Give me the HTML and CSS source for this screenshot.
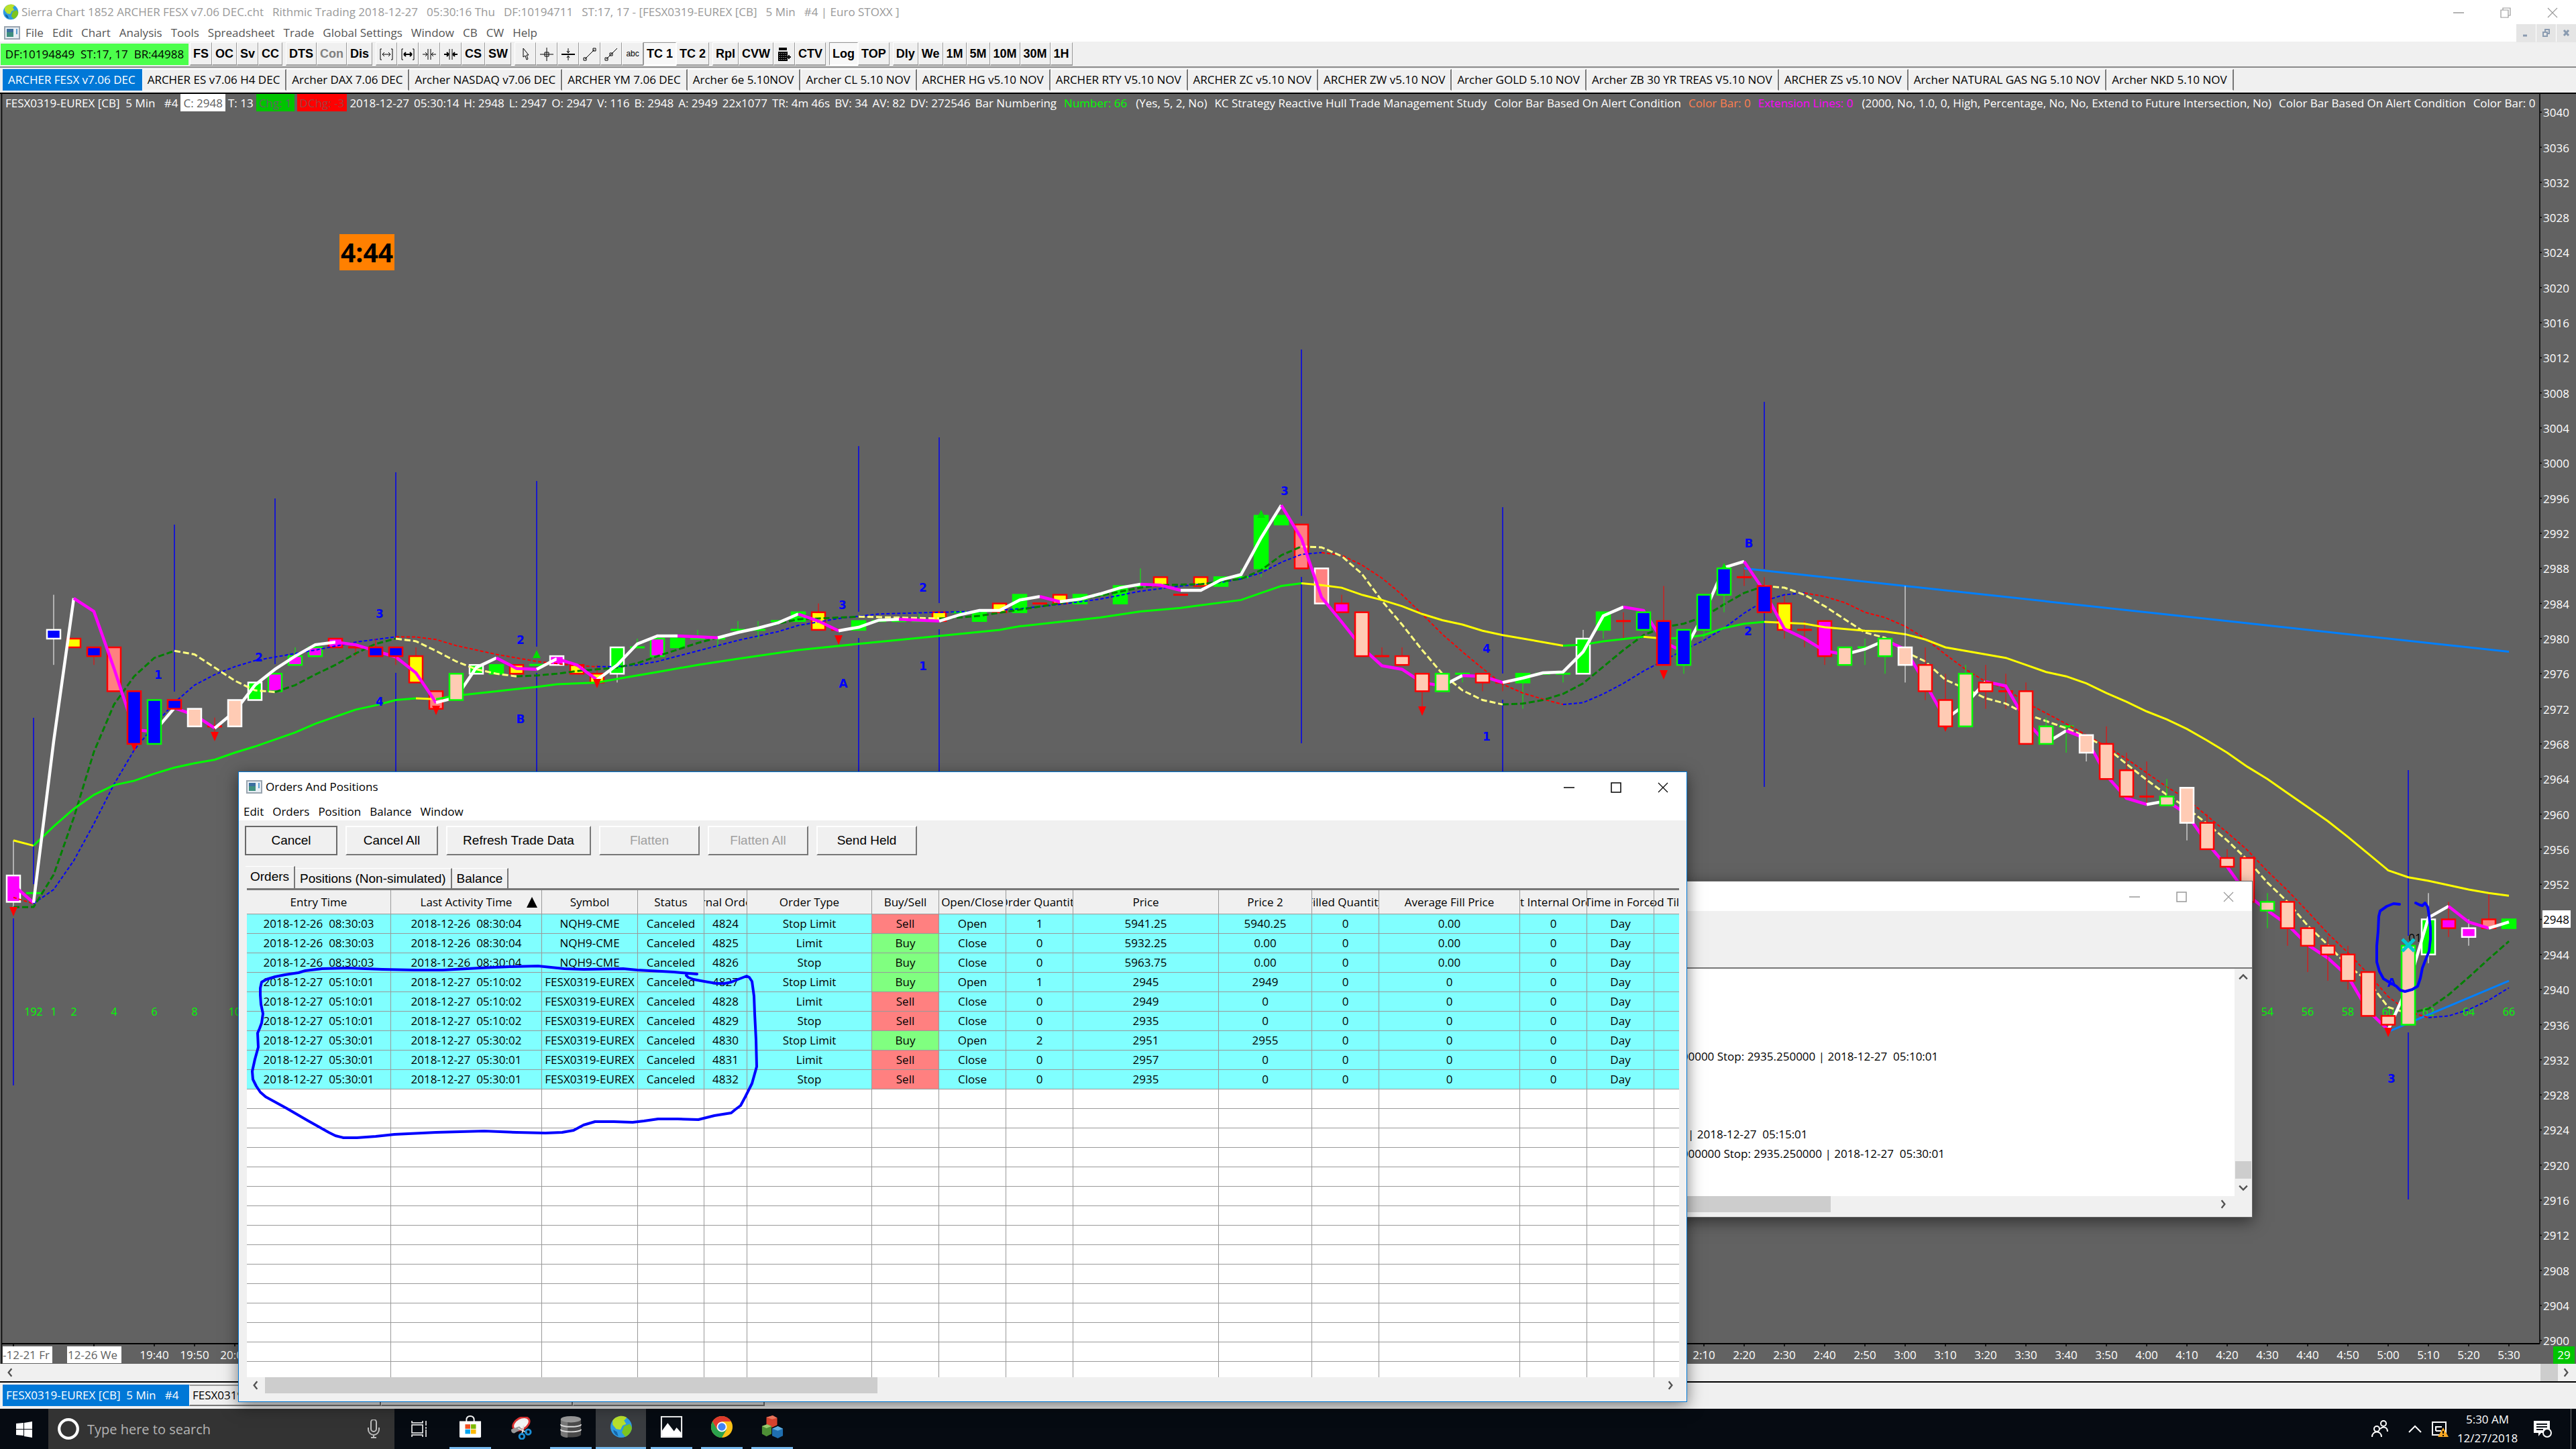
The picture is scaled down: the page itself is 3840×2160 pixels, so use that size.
FILE: index.html
```html
<!DOCTYPE html>
<html lang="en">
<head>
  <meta charset="UTF-8" />
  <meta name="viewport" content="width=device-width, initial-scale=1.0"/>
  <title>Sierra Chart 1852 ARCHER FESX v7.06 DEC.cht</title>
  <link rel="stylesheet" href="styles.css">
</head>
<body>

  <svg class="sprite" aria-hidden="true">
    <symbol id="globe" viewBox="0 0 32 32">
      <circle cx="16" cy="16" r="15" fill="#2f9be0"/>
      <path d="M4 7c5-7 15-8 20-4l-4 4 3 5-5 2-3 6-6-1-5-6z" fill="#b9e02c"/>
      <path d="M20 15l8-3 3 5c0 6-5 11-9 13l-5-6z" fill="#7cc41f"/>
      <path d="M5 20l5 3 2 6c-4-1-7-5-7-9z" fill="#1565a8"/>
    </symbol>
    <symbol id="doc" viewBox="0 0 24 20">
      <rect x="1" y="1" width="22" height="18" fill="#e8eef4" stroke="#9aa5b0" stroke-width="2"/>
      <rect x="4" y="4" width="10" height="12" fill="#3f8f7f"/>
      <rect x="4" y="4" width="10" height="5" fill="#3b6fa0"/>
      <rect x="18" y="4" width="2" height="8" fill="#5b9fd0"/>
    </symbol>
    <symbol id="min" viewBox="0 0 16 16"><path d="M0 8h16" stroke="currentColor" stroke-width="1.5"/></symbol>
    <symbol id="max" viewBox="0 0 16 16"><rect x="1" y="1" width="14" height="14" fill="none" stroke="currentColor" stroke-width="1.5"/></symbol>
    <symbol id="restore" viewBox="0 0 16 16"><path d="M1 4h11v11H1zM4 4V1h11v11h-3" fill="none" stroke="currentColor" stroke-width="1.2"/></symbol>
    <symbol id="close" viewBox="0 0 16 16"><path d="M1 1l14 14M15 1L1 15" stroke="currentColor" stroke-width="1.2"/></symbol>
    <symbol id="left" viewBox="0 0 12 12"><path d="M8 1L4 6l4 5" fill="none" stroke="#505050" stroke-width="2"/></symbol>
    <symbol id="right" viewBox="0 0 12 12"><path d="M4 1l4 5-4 5" fill="none" stroke="#505050" stroke-width="2"/></symbol>
    <symbol id="up" viewBox="0 0 12 12"><path d="M1 8l5-5 5 5" fill="none" stroke="#505050" stroke-width="2"/></symbol>
    <symbol id="down" viewBox="0 0 12 12"><path d="M1 4l5 5 5-5" fill="none" stroke="#505050" stroke-width="2"/></symbol>
  </svg>

  <header class="titlebar">
    <svg class="app-icon"><use href="#globe"/></svg>
    <div class="title">
      <span>Sierra Chart 1852 ARCHER FESX v7.06 DEC.cht</span>
      <span>Rithmic Trading 2018-12-27</span>
      <span>05:30:16 Thu</span>
      <span>DF:10194711</span>
      <span>ST:17, 17 - [FESX0319-EUREX [CB]</span>
      <span>5 Min</span>
      <span>#4 | Euro STOXX ]</span>
    </div>
    <div class="controls">
      <button aria-label="Minimize"><svg><use href="#min"/></svg></button>
      <button aria-label="Restore"><svg><use href="#restore"/></svg></button>
      <button aria-label="Close"><svg><use href="#close"/></svg></button>
    </div>
  </header>

  <nav class="menubar">
    <svg class="doc-icon"><use href="#doc"/></svg>
    <button>File</button><button>Edit</button><button>Chart</button><button>Analysis</button><button>Tools</button><button>Spreadsheet</button><button>Trade</button><button>Global Settings</button><button>Window</button><button>CB</button><button>CW</button><button>Help</button>
    <div class="mdi">
      <button aria-label="Minimize chart"><svg><path d="M1 10h6" stroke="#8a9bb0" stroke-width="3"/></svg></button>
      <button aria-label="Restore chart"><svg><path d="M1 5h6v6H1zM4 4V1h6v6H8" fill="none" stroke="#8a9bb0" stroke-width="2"/></svg></button>
      <button aria-label="Close chart"><svg><path d="M2 2l7 8M9 2l-7 8" stroke="#8a9bb0" stroke-width="3"/></svg></button>
    </div>
  </nav>

  <div class="toolbar">
    <span class="status">DF:10194849&nbsp; ST:17, 17&nbsp; BR:44988</span>
    <div class="group"><button>FS</button><button>OC</button><button>Sv</button><button>CC</button></div>
    <div class="group"><button>DTS</button><button class="off">Con</button><button>Dis</button></div>
    <div class="group">
      <button class="ico" aria-label="Narrower"><svg viewBox="0 0 20 20"><path d="M1 2h2M1 18h2M1 2v16M17 2h2M17 18h2M19 2v16M4 10h12M4 10l3-3M4 10l3 3M16 10l-3-3M16 10l-3 3"/></svg></button>
      <button class="ico" aria-label="Wider"><svg viewBox="0 0 20 20"><path d="M1 2h2M1 18h2M1 2v16M17 2h2M17 18h2M19 2v16"/><path class="bold" d="M4 10h12M4 10l3-3M4 10l3 3M16 10l-3-3M16 10l-3 3"/></svg></button>
      <button class="ico" aria-label="Squeeze bars"><svg viewBox="0 0 20 20"><path d="M8 2v16M12 2v16M0 10h7M7 10L4 7M7 10l-3 3M20 10h-7M13 10l3-3M13 10l3 3"/></svg></button>
      <button class="ico" aria-label="Squeeze bars more"><svg viewBox="0 0 20 20"><path d="M8 2v16M12 2v16"/><path class="bold" d="M0 10h7M7 10L4 7M7 10l-3 3M20 10h-7M13 10l3-3M13 10l3 3"/></svg></button>
      <button>CS</button><button>SW</button>
    </div>
    <div class="group">
      <button class="ico" aria-label="Pointer"><svg viewBox="0 0 20 20"><path d="M7 1v13l3-2 2 6 2-1-2-6h3z"/></svg></button>
      <button class="ico" aria-label="Cross hair"><svg viewBox="0 0 20 20"><path d="M10 0v20M0 10h20M7 7h6v6H7z"/></svg></button>
      <button class="ico" aria-label="Chart values"><svg viewBox="0 0 20 20"><path class="bold" d="M0 10h20"/><path d="M10 1v6M10 13v6M8 5l2 3 2-3M8 15l2-3 2 3"/></svg></button>
      <button class="ico" aria-label="Line"><svg viewBox="0 0 20 20"><path d="M3 17L17 3M1 15h4v4H1zM15 1h4v4h-4z"/></svg></button>
      <button class="ico" aria-label="Ray"><svg viewBox="0 0 20 20"><path d="M3 17L19 1M1 15h4v4H1zM8 8h4v4H8z"/></svg></button>
      <button class="ico abc">abc</button>
      <button class="pressed">TC 1</button><button>TC 2</button>
    </div>
    <div class="group">
      <button>Rpl</button><button>CVW</button>
      <button class="ico" aria-label="Trade window"><svg viewBox="0 0 20 20"><path d="M2 1h12M2 3h12M2 7h12v12H2zM2 10h12M2 13h12M2 16h12M5 7v12M8 7v12M11 7v12M14 14h6M17 11v6" class="bold"/></svg></button>
      <button>CTV</button>
    </div>
    <div class="group"><button class="pressed">Log</button><button>TOP</button></div>
    <div class="group"><button>Dly</button><button>We</button><button>1M</button><button>5M</button><button>10M</button><button>30M</button><button>1H</button></div>
  </div>

  <div class="tabs">
    <button class="active">ARCHER FESX v7.06 DEC</button><button>ARCHER ES v7.06 H4 DEC</button><button>Archer DAX 7.06 DEC</button><button>Archer NASDAQ v7.06 DEC</button><button>ARCHER YM 7.06 DEC</button><button>Archer 6e 5.10NOV</button><button>Archer CL 5.10 NOV</button><button>ARCHER HG v5.10 NOV</button><button>ARCHER RTY V5.10 NOV</button><button>ARCHER ZC v5.10 NOV</button><button>ARCHER ZW v5.10 NOV</button><button>Archer GOLD 5.10 NOV</button><button>Archer ZB 30 YR TREAS V5.10 NOV</button><button>ARCHER ZS v5.10 NOV</button><button>Archer NATURAL GAS NG 5.10 NOV</button><button>Archer NKD 5.10 NOV</button>
  </div>

  <main class="chart">
    <svg id="plot" viewBox="0 140 3840 1893" preserveAspectRatio="none"></svg>
    <div class="readout">
      <div class="fields boxes">
        <span>FESX0319-EUREX [CB]&nbsp; 5 Min&nbsp;&nbsp; #4</span>
        <span class="box white">C: 2948</span>
        <span>T: 13</span>
        <span class="box green">Chg: 1</span>
        <span class="box red">DChg: -3</span>
      </div>
      <div class="fields">
        <span>2018-12-27</span><span>05:30:14</span><span>H: 2948</span><span>L: 2947</span><span>O: 2947</span><span>V: 116</span><span>B: 2948</span><span>A: 2949</span><span>22x1077</span><span>TR: 4m 46s</span><span>BV: 34</span><span>AV: 82</span><span>DV: 272546</span><span>Bar Numbering</span>
      </div>
      <span class="lime">Number: 66</span>
      <span class="after">(Yes, 5, 2, No)</span>
      <span>KC Strategy Reactive Hull Trade Management Study</span>
      <span>Color Bar Based On Alert Condition</span>
      <span class="coral">Color Bar: 0</span>
      <span class="pink">Extension Lines: 0</span>
      <span class="after">(2000, No, 1.0, 0, High, Percentage, No, No, Extend to Future Intersection, No)</span>
      <span>Color Bar Based On Alert Condition</span>
      <span>Color Bar: 0</span>
    </div>
    <div class="timer">4:44</div>
  </main>

  <div class="scroll-row">
    <svg><use href="#left"/></svg>
    <span class="thumb"></span>
    <svg><use href="#right"/></svg>
  </div>

  <div class="tabs bottom">
    <button class="active">FESX0319-EUREX [CB]&nbsp; 5 Min&nbsp;&nbsp; #4</button><button>FESX0319-EUREX [CB]&nbsp; 5 Min&nbsp;&nbsp; #5</button><button>FESX0319-EUREX [CB]&nbsp; 5 Min&nbsp;&nbsp; #6</button><button>FESX0319-EUREX [CB]&nbsp; Daily&nbsp;&nbsp; #7</button>
  </div>

  <footer class="taskbar">
    <button class="start" aria-label="Start"><svg viewBox="0 0 24 24"><path d="M0 3l11-1v9H0zM12 2l12-2v11H12zM0 12h11v9L0 20zM12 12h12v12l-12-2z" fill="#fff"/></svg></button>
    <label class="search">
      <svg class="ring" viewBox="0 0 32 32"><circle cx="16" cy="16" r="13" fill="none" stroke="#fff" stroke-width="4"/></svg>
      <input type="text" placeholder="Type here to search" />
      <svg class="mic" viewBox="0 0 20 28"><path d="M6 4a4 4 0 0 1 8 0v10a4 4 0 0 1-8 0zM2 12v3a8 8 0 0 0 16 0v-3M10 23v4M6 27h8" fill="none" stroke="#bbb" stroke-width="2"/></svg>
    </label>
    <button class="app" aria-label="Task view"><svg class="small" viewBox="0 0 26 26"><path d="M1 7h16v12H1zM1 1v3h16V1M1 25v-3h16v3M22 1v7M22 14v11M22 10v3" fill="none" stroke="#fff" stroke-width="1.500"/></svg></button>
    <button class="app open" aria-label="Store"><svg viewBox="0 0 36 36"><path d="M12 11V7q0-6 6-6t6 6v4" fill="none" stroke="#fff" stroke-width="2"/><path d="M1 9h34v24q0 2-2 2H3q-2 0-2-2z" fill="#fff"/><path d="M10 14h8v7h-8z" fill="#f25022"/><path d="M19 14h8v7h-8z" fill="#7fba00"/><path d="M10 22h8v7h-8z" fill="#00a4ef"/><path d="M19 22h8v7h-8z" fill="#ffb900"/></svg></button>
    <button class="app" aria-label="Snipping tool"><svg viewBox="0 0 36 36"><ellipse cx="19" cy="11" rx="14" ry="9" transform="rotate(-30 19 11)" fill="#f4f4f4" stroke="#d33" stroke-width="3"/><path d="M3 20l13-5 4 4-12 7q-5 0-5-6z" fill="#999"/><path d="M14 18l14 7M23 14l-3 14" stroke="#ddd" stroke-width="2"/><circle cx="30" cy="24" r="4" fill="none" stroke="#1b8fd6" stroke-width="3"/><circle cx="20" cy="31" r="4" fill="none" stroke="#1b8fd6" stroke-width="3"/></svg></button>
    <button class="app open" aria-label="Database"><svg viewBox="0 0 36 36"><path d="M2 6v24c0 6 32 6 32 0V6z" fill="#4a4a4a"/><path d="M2 6v24c0 3 6 5 11 5V6z" fill="#777"/><path d="M2 14c0 5 32 5 32 0M2 22c0 5 32 5 32 0" fill="none" stroke="#ddd" stroke-width="2"/><ellipse cx="18" cy="6" rx="16" ry="5" fill="#999"/></svg></button>
    <button class="app open current" aria-label="Sierra Chart"><svg><use href="#globe"/></svg></button>
    <button class="app open" aria-label="Photos"><svg viewBox="0 0 36 36"><rect x="2" y="2" width="32" height="32" fill="#0a0f16" stroke="#fff" stroke-width="2"/><path d="M3 24l9-12 10 13 4-6 7 8v6H3z" fill="#fff"/></svg></button>
    <button class="app open" aria-label="Chrome"><svg viewBox="0 0 36 36"><circle cx="18" cy="18" r="17" fill="#fbc116"/><path d="M3.300 9.500A17 17 0 0 1 32.700 9.500H18l-7.400 12.700z" fill="#e33b2e"/><path d="M3.300 9.500A17 17 0 0 0 18 35l7.400-12.700-14.800 0z" fill="#2ba24c"/><circle cx="18" cy="18" r="8" fill="#fff"/><circle cx="18" cy="18" r="6" fill="#4285f4"/></svg></button>
    <button class="app open" aria-label="MFC application"><svg viewBox="0 0 36 36"><path d="M9 3l10-3 7 4v11l-8 4-9-4z" fill="#d8442f"/><path d="M9 3l9 3 8-2-7-4z" fill="#f07a60"/><path d="M2 17l8-3 7 3v12l-8 4-7-4z" fill="#4d8f35"/><path d="M2 17l7 3 8-3-7-3z" fill="#9ccc70"/><path d="M18 21l9-4 8 4v11l-8 4-9-4z" fill="#1f6fb0"/><path d="M18 21l9 3 8-3-8-4z" fill="#62aee0"/></svg></button>
    <div class="tray">
      <svg class="people" viewBox="0 0 28 28"><circle cx="9" cy="14" r="4"/><circle cx="19" cy="6" r="4"/><path d="M2 26c0-10 14-10 14 0M14 14c5-5 11-2 11 4"/></svg>
      <svg class="chev" viewBox="0 0 20 12"><path d="M1 11l9-9 9 9"/></svg>
      <svg class="net" viewBox="0 0 26 26"><path d="M2 3h20v19H2zM7 16v-6h9M7 16h8" /><path d="M18 11l8 14H10z" fill="#f5a623" stroke="none"/><path d="M18 16v4M18 22v2" stroke="#000"/></svg>
      <div class="clock"><span>5:30 AM</span><span>12/27/2018</span></div>
      <svg class="note" viewBox="0 0 28 28"><path d="M1 2h24v18H12l-4 5v-5H1z" fill="#fff" stroke="none"/><path d="M5 7h16M5 11h16M5 15h10" stroke="#0a0f16"/><circle cx="21" cy="20" r="6" fill="#0a0f16"/></svg>
      <button class="peek" aria-label="Show desktop"></button>
    </div>
  </footer>

  <!-- message log, sits behind the orders window -->
  <section class="window log">
    <div class="win-title">
      <div class="controls">
        <button aria-label="Minimize"><svg><use href="#min"/></svg></button>
        <button aria-label="Maximize"><svg><use href="#max"/></svg></button>
        <button aria-label="Close"><svg><use href="#close"/></svg></button>
      </div>
    </div>
    <div class="log-space"></div>
    <div class="log-main">
      <div class="log-text">
        <p>000000 Stop: 2935.250000 | 2018-12-27&nbsp; 05:10:01</p>
        <p></p><p></p><p></p>
        <p class="short">| 2018-12-27&nbsp; 05:15:01</p>
        <p>0000000 Stop: 2935.250000 | 2018-12-27&nbsp; 05:30:01</p>
      </div>
      <div class="vscroll"><svg><use href="#up"/></svg><span class="thumb"></span><svg><use href="#down"/></svg></div>
    </div>
    <div class="hscroll"><span class="thumb"></span><svg><use href="#right"/></svg></div>
  </section>

  <section class="window orders">
    <div class="win-title">
      <svg class="doc-icon"><use href="#doc"/></svg>
      <span>Orders And Positions</span>
      <div class="controls">
        <button aria-label="Minimize"><svg><use href="#min"/></svg></button>
        <button aria-label="Maximize"><svg><use href="#max"/></svg></button>
        <button aria-label="Close"><svg><use href="#close"/></svg></button>
      </div>
    </div>
    <nav class="win-menu"><button>Edit</button><button>Orders</button><button>Position</button><button>Balance</button><button>Window</button></nav>
    <div class="actions">
      <button class="default">Cancel</button>
      <button>Cancel All</button>
      <button class="wide">Refresh Trade Data</button>
      <button class="mid" disabled>Flatten</button>
      <button class="mid" disabled>Flatten All</button>
      <button class="mid">Send Held</button>
    </div>
    <div class="win-tabs"><button class="on">Orders</button><button>Positions (Non-simulated)</button><button>Balance</button></div>
    <div class="grid">
      <table>
        <colgroup>
          <col class="c-entry"><col class="c-last"><col class="c-symbol"><col class="c-status"><col class="c-id"><col class="c-type"><col><col><col><col class="c-price"><col class="c-price2"><col><col class="c-avg"><col><col><col>
        </colgroup>
        <thead>
          <tr>
            <th><div>Entry Time</div></th><th><div>Last Activity Time <i class="sort"></i></div></th><th><div>Symbol</div></th><th><div>Status</div></th><th><div>Internal Order ID</div></th><th><div>Order Type</div></th><th><div>Buy/Sell</div></th><th><div>Open/Close</div></th><th><div>Order Quantity</div></th><th><div>Price</div></th><th><div>Price 2</div></th><th><div>Filled Quantity</div></th><th><div>Average Fill Price</div></th><th><div>Parent Internal Order ID</div></th><th><div>Time in Force</div></th><th><div>Good Till Date-Time</div></th>
          </tr>
        </thead>
        <tbody id="orderRows"></tbody>
      </table>
    </div>
    <div class="hscroll"><svg><use href="#left"/></svg><span class="thumb"></span><svg class="end"><use href="#right"/></svg></div>
  </section>

  <!-- pen marks over everything -->
  <svg class="ink" viewBox="0 0 3840 2160" preserveAspectRatio="none">
    <polyline points="1039,1452 1005,1449 950,1446 929,1444 870,1445 841,1444 802,1440 760,1441 715,1443 660,1446 617,1446 570,1445 518,1443 480,1444 455,1447 445,1450 425,1453 410,1456 397,1460 390,1464 388,1473 388,1483 389,1497 392,1511 390,1525 387,1533 384,1540 385,1561 380,1579 376,1597 377,1609 382,1619 388,1628 396,1635 427,1652 458,1670 490,1688 500,1693 512,1696 532,1696 560,1694 588,1691 650,1688 722,1686 770,1688 813,1689 838,1688 855,1685 870,1677 887,1672 915,1672 943,1673 960,1671 981,1668 1010,1668 1041,1669 1065,1663 1090,1659 1096,1654 1104,1648 1111,1635 1121,1615 1128,1590 1127,1550 1125,1511 1124,1485 1121,1463 1117,1457 1113,1455 1100,1460 1090,1464 1080,1466 1068,1466 1050,1463 1034,1460 1026,1457 1023,1454"/>
    <polyline points="3577,1348 3568,1347 3558,1351 3548,1358 3546,1366 3545,1388 3543,1410 3543,1434 3547,1448 3553,1459 3563,1465 3572,1470 3578,1476 3585,1478 3596,1475 3604,1470 3608,1458 3611,1443 3616,1430 3621,1418 3623,1400 3623,1383 3621,1365 3619,1352 3615,1346 3611,1350 3607,1349 3601,1346"/>
  </svg>

  <script src="chart.js"></script>
</body>
</html>
```

FILE: styles.css
```css
* {
  box-sizing: border-box;
}

body {
  margin: 0;
  height: 100vh;
  display: flex;
  flex-direction: column;
  position: relative;
  overflow: hidden;
  background: #f0f0f0;
  color: #000;
  font-family: "Open Sans", "Noto Sans", sans-serif;
  font-size: 17px;
  line-height: 24px;
  white-space: nowrap;
}

button, input {
  font: inherit;
  color: inherit;
  background: none;
  border: none;
  padding: 0;
  margin: 0;
}

.sprite {
  position: absolute;
  width: 0;
  height: 0;
}

/* title and menu */
.titlebar {
  display: flex;
  align-items: center;
  flex: none;
  height: 36px;
  padding-left: 4px;
  background: #fff;
  color: #999;
}

.app-icon {
  width: 24px;
  height: 24px;
  margin-right: 4px;
}

.title {
  display: flex;
  gap: 13px;
}

.controls {
  display: flex;
  margin-left: auto;
}

.controls button {
  width: 70px;
  height: 32px;
}

.controls svg {
  width: 16px;
  height: 16px;
  vertical-align: middle;
}

.menubar {
  display: flex;
  align-items: center;
  flex: none;
  height: 26px;
  padding-left: 6px;
  gap: 13px;
  background: #fff;
  color: #555;
}

.doc-icon {
  width: 24px;
  height: 20px;
}

.menubar .doc-icon {
  margin-right: -5px;
}

.mdi {
  display: flex;
  gap: 1px;
  margin-left: auto;
}

.mdi button {
  width: 29px;
  height: 27px;
  background: #e5e5e5;
}

.mdi svg {
  width: 12px;
  height: 12px;
}

/* toolbar */
.toolbar {
  display: flex;
  align-items: center;
  flex: none;
  height: 39px;
  gap: 5px;
  padding-left: 1px;
  border-bottom: 2px solid #8a8a8a;
  font-family: "Liberation Sans", Arial, sans-serif;
  font-weight: bold;
  font-size: 18px;
}

.status {
  width: 280px;
  margin-right: -3px;
  text-align: center;
  line-height: 32px;
  background: #4cff4c;
  font-family: "Open Sans", "Noto Sans", sans-serif;
  font-weight: normal;
  font-size: 17px;
}

.group {
  display: flex;
}

.group button {
  height: 35px;
  padding: 0 4px;
  border: 1px solid #fff;
  border-right-color: #999;
  border-bottom: 2px solid #999;
}

.group .off {
  color: #808080;
}

.group .pressed {
  background: #f8f8f8;
  border-color: #999 #fff #fff #999;
}

.group .ico {
  width: 32px;
}

.ico svg {
  width: 20px;
  height: 20px;
  fill: none;
  stroke: #000;
  stroke-width: 1;
  vertical-align: middle;
}

.ico .bold {
  stroke-width: 2;
}

.group .abc {
  font-size: 12px;
  font-weight: normal;
}

/* chartbook tabs */
.tabs {
  display: flex;
  flex: none;
  height: 39px;
  padding: 2px 0 3px 4px;
  border-bottom: 2px solid #000;
}

.tabs button {
  padding: 0 8px 0 7px;
  border: 1px solid #fff;
  border-right: 2px solid #777;
}

.tabs .active {
  background: #0078d7;
  color: #fff;
  border-color: #0078d7;
}

.tabs.bottom {
  padding: 3px 0 4px 4px;
  border-bottom: none;
}

.bottom button {
  width: 286px;
  padding: 0 4px;
  text-align: left;
  border-top: 2px solid #999;
  border-bottom: 2px solid #777;
}

.bottom .active {
  width: 278px;
}

/* chart */
.chart {
  position: relative;
  flex: 1;
  min-height: 0;
  background: #626262;
}

.chart > svg {
  display: block;
  width: 100%;
  height: 100%;
}

.chart .nums {
  font-size: 16px;
  fill: #00ff00;
}

.chart .marks {
  font-family: "DejaVu Sans", sans-serif;
  font-weight: bold;
  font-size: 17px;
  fill: #0000ff;
}

.readout {
  position: absolute;
  top: 0;
  left: 8px;
  right: 54px;
  display: flex;
  gap: 11px;
  height: 26px;
  overflow: hidden;
  color: #fff;
  line-height: 27px;
}

.fields {
  display: flex;
  gap: 7px;
}

.boxes {
  gap: 4px;
  margin-right: -7px;
}

.readout .after {
  margin-left: 2px;
}

.box {
  padding: 0 4px;
}

.white {
  background: #fff;
  color: #626262;
}

.green {
  background: #00c400;
  color: #626262;
}

.red {
  background: #ff0000;
  color: #a04040;
}

.lime {
  color: #00ff00;
}

.coral {
  color: #ff7f50;
}

.pink {
  color: #ff00ff;
}

.timer {
  position: absolute;
  left: 506px;
  top: 209px;
  padding: 0 2px;
  background: #ff8000;
  font-weight: bold;
  font-size: 39px;
  line-height: 54px;
}

.scroll-row {
  display: flex;
  align-items: center;
  flex: none;
  height: 28px;
  padding: 0 8px;
  border-bottom: 2px solid #000;
}

.scroll-row svg, .hscroll svg, .vscroll svg {
  width: 14px;
  height: 14px;
}

.scroll-row .thumb {
  width: 26px;
  height: 26px;
  margin-left: auto;
  margin-right: 5px;
}

.thumb {
  background: #cdcdcd;
}

/* windows taskbar */
.taskbar {
  display: flex;
  flex: none;
  height: 60px;
  background: #060b12;
  color: #fff;
}

.start {
  width: 72px;
}

.start svg {
  width: 24px;
  height: 24px;
  vertical-align: middle;
}

.search {
  display: flex;
  align-items: center;
  width: 516px;
  padding: 0 21px 0 13px;
  background: #333;
}

.ring {
  width: 34px;
  height: 34px;
}

.search input {
  flex: 1;
  padding: 2px 0 0 11px;
  font-size: 20px;
}

.search input::placeholder {
  color: #b4b4b4;
}

.mic {
  width: 20px;
  height: 28px;
}

.app {
  width: 75px;
  padding: 0 6px 0 7px;
}

.app svg {
  display: block;
  width: 34px;
  height: 34px;
  margin: 10px auto 13px;
}

.app .small {
  width: 26px;
  height: 26px;
  margin: 17px auto;
}

.open::after {
  content: "";
  display: block;
  height: 3px;
  background: #76b9ed;
}

.current {
  padding: 0;
  background: #3a3d41;
}

.tray {
  display: flex;
  align-items: center;
  margin-left: auto;
}

.tray svg {
  fill: none;
  stroke: #fff;
  stroke-width: 2;
}

.people {
  width: 28px;
  height: 28px;
}

.chev {
  width: 20px;
  height: 12px;
  margin-left: 28px;
}

.net {
  width: 26px;
  height: 26px;
  margin-left: 14px;
}

.clock {
  display: flex;
  flex-direction: column;
  align-items: center;
  width: 110px;
  padding-left: 6px;
  line-height: 28px;
}

.note {
  width: 28px;
  height: 28px;
  margin: 0 28px 0 16px;
}

.peek {
  width: 8px;
  height: 60px;
  border-left: 1px solid #777;
}

/* floating windows */
.window {
  position: absolute;
  display: flex;
  flex-direction: column;
  background: #f0f0f0;
  box-shadow: 0 6px 22px rgba(0, 0, 0, 0.5);
}

.win-title {
  display: flex;
  align-items: center;
  height: 44px;
  background: #fff;
}

.log {
  left: 2400px;
  top: 1313px;
  width: 958px;
  height: 502px;
  border: 1px solid #666;
}

.log .win-title {
  color: #999;
}

.log-space {
  height: 84px;
}

.log-main {
  display: flex;
  flex: 1;
  border-top: 2px solid #777;
  background: #fff;
}

.log-text {
  flex: 1;
  padding: 116px 0 0 96px;
  overflow: hidden;
}

.log-text p {
  margin: 0;
  height: 29px;
  line-height: 29px;
}

.log-text .short {
  padding-left: 19px;
}

.vscroll {
  display: flex;
  flex-direction: column;
  align-items: center;
  width: 26px;
  padding: 6px 0;
  background: #f0f0f0;
}

.vscroll .thumb {
  width: 24px;
  height: 26px;
  margin-top: auto;
  margin-bottom: 6px;
}

.hscroll {
  display: flex;
  align-items: center;
  height: 24px;
}

.log .hscroll {
  margin: 0 36px 7px 0;
}

.log .hscroll .thumb {
  width: 328px;
  height: 24px;
}

.log .hscroll svg, .hscroll .end {
  margin-left: auto;
}

.orders {
  left: 355px;
  top: 1150px;
  width: 2160px;
  height: 940px;
  border: 1px solid #0078d7;
}

.orders .win-title {
  padding-left: 11px;
  gap: 5px;
}

.win-menu {
  display: flex;
  gap: 13px;
  height: 28px;
  padding: 2px 0 0 7px;
  background: #fff;
}

.actions {
  display: flex;
  gap: 12px;
  padding: 8px 9px 0;
  font-family: "Liberation Sans", Arial, sans-serif;
  font-size: 19px;
}

.actions button {
  width: 138px;
  height: 44px;
  border: 2px solid #fff;
  border-right-color: #777;
  border-bottom-color: #777;
}

.actions .default {
  border: 2px solid #696969;
}

.actions .wide {
  width: 216px;
}

.actions .mid {
  width: 150px;
}

.actions button:disabled {
  color: #a0a0a0;
}

.win-tabs {
  display: flex;
  align-items: flex-end;
  height: 49px;
  padding: 0 10px;
  font-family: "Liberation Sans", Arial, sans-serif;
  font-size: 19px;
}

.win-tabs button {
  height: 30px;
  padding: 0 7px;
  border-top: 1px solid #fff;
  border-right: 2px solid #777;
}

.win-tabs .on {
  height: 33px;
  padding-bottom: 3px;
}

.grid {
  flex: 1;
  min-height: 0;
  margin: 0 11px 0 12px;
  overflow: hidden;
  border-top: 3px solid #777;
  background: #fff;
}

.grid table {
  width: 2198px;
  table-layout: fixed;
  border-collapse: separate;
  border-spacing: 0;
}

.grid col {
  width: 100px;
}

.grid .c-entry {
  width: 215px;
}

.grid .c-last {
  width: 225px;
}

.grid .c-symbol {
  width: 143px;
}

.grid .c-status {
  width: 99px;
}

.grid .c-id {
  width: 64px;
}

.grid .c-type {
  width: 186px;
}

.grid .c-price {
  width: 217px;
}

.grid .c-price2 {
  width: 139px;
}

.grid .c-avg {
  width: 210px;
}

.grid th, .grid td {
  height: 29px;
  padding: 0;
  overflow: hidden;
  text-align: center;
  line-height: 28px;
  border-right: 1px solid #999;
  border-bottom: 1px solid #999;
}

.grid th {
  height: 36px;
  background: #f0f0f0;
  font-weight: normal;
}

.grid th div {
  display: flex;
  justify-content: center;
  align-items: center;
}

.sort {
  margin: 0 -38px 0 22px;
  border: 8px solid transparent;
  border-top: none;
  border-bottom: 16px solid #000;
}

.filled td {
  background: #80ffff;
}

.filled .sell {
  background: #ff8080;
}

.filled .buy {
  background: #80ff80;
}

.orders .hscroll {
  margin: 0 11px 12px 12px;
  padding: 0 6px;
}

.orders .hscroll .thumb {
  width: 913px;
  height: 24px;
  margin-left: 7px;
}

.ink {
  position: absolute;
  top: 0;
  left: 0;
  width: 100%;
  height: 100%;
  pointer-events: none;
}

.ink polyline {
  fill: none;
  stroke: #0000ff;
  stroke-width: 4;
  stroke-linecap: round;
  stroke-linejoin: round;
}
```

FILE: chart.js
```js
const fills = { m: "#ff00ff", g: "#00ff00", y: "#ffff00", b: "#0000ff", s: "#ff8080", p: "#ffcbb4" };
const edges = { w: "#ffffff", r: "#ff0000", g: "#00ff00" };

// body top, body bottom, high, low, fill + border
const bars = [
  [2953,2950,2957,2949,"mw"],[2951,2951,2951,2951,"gg"],[2981,2980,2985,2977,"bw"],[2980,2979,2980,2979,"yr"],[2979,2978,2979,2977,"br"],
  [2979,2974,2979,2974,"sr"],[2974,2968,2974,2968,"br"],[2973,2968,2973,2968,"bg"],[2973,2972,2973,2972,"br"],[2972,2970,2972,2970,"pw"],
  [2970,2970,2971,2969,"rr"],[2973,2970,2973,2970,"pw"],[2975,2973,2975,2973,"gw"],[2976,2974,2976,2974,"mg"],[2978,2977,2979,2977,"mg"],
  [2979,2978,2979,2978,"mg"],[2980,2979,2980,2979,"mr"],[2979,2979,2979,2978,"rr"],[2979,2978,2980,2978,"br"],[2979,2978,2979,2977,"br"],
  [2978,2975,2979,2975,"yr"],[2974,2972,2974,2972,"sr"],[2976,2973,2976,2973,"pg"],[2977,2976,2977,2976,"gw"],[2977,2976,2977,2976,"gg"],
  [2977,2976,2977,2976,"yr"],[2977,2977,2977,2977,"gg"],[2978,2977,2978,2977,"mw"],[2977,2976,2977,2976,"yr"],[2976,2975,2977,2975,"yr"],
  [2979,2976,2979,2975,"gw"],[2979,2979,2980,2979,"gg"],[2980,2978,2980,2978,"mg"],[2980,2979,2980,2979,"gg"],[2980,2980,2981,2980,"gg"],
  [2980,2980,2980,2979,"gg"],[2981,2981,2982,2981,"gg"],[2981,2981,2982,2980,"gg"],[2982,2982,2982,2982,"gg"],[2983,2982,2983,2982,"gg"],
  [2983,2981,2984,2981,"yr"],[2981,2981,2981,2981,"rr"],[2982,2981,2982,2981,"gg"],[2982,2982,2982,2982,"gg"],[2982,2982,2982,2982,"gg"],
  [2982,2982,2983,2982,"gg"],[2983,2982,2983,2982,"yr"],[2983,2983,2983,2983,"gg"],[2983,2982,2983,2982,"gg"],[2984,2983,2984,2983,"yr"],
  [2985,2983,2985,2983,"gg"],[2984,2984,2984,2984,"rr"],[2985,2984,2985,2984,"yr"],[2985,2984,2985,2984,"gg"],[2985,2985,2985,2985,"gg"],
  [2986,2984,2986,2984,"gg"],[2986,2986,2988,2986,"gg"],[2987,2986,2987,2986,"yr"],[2985,2985,2985,2985,"rr"],[2987,2986,2987,2986,"yr"],
  [2987,2986,2987,2986,"gg"],[2987,2987,2988,2987,"gg"],[2994,2988,2994,2987,"gg"],[2994,2993,2994,2993,"gg"],[2993,2988,2993,2988,"sr"],
  [2988,2984,2988,2984,"sw"],[2984,2983,2985,2983,"mr"],[2983,2978,2983,2978,"pr"],[2978,2978,2979,2978,"rr"],[2978,2977,2979,2977,"pr"],
  [2976,2974,2976,2972,"pr"],[2976,2974,2976,2974,"pg"],[2976,2976,2976,2975,"gg"],[2976,2975,2976,2974,"pr"],[2975,2975,2975,2974,"rr"],
  [2976,2975,2976,2972,"gg"],[2976,2976,2976,2976,"gg"],[2976,2976,2976,2975,"gg"],[2980,2976,2981,2976,"gw"],[2983,2981,2983,2980,"gg"],
  [2982,2982,2983,2980,"rr"],[2983,2981,2983,2981,"bg"],[2982,2977,2986,2977,"br"],[2981,2977,2981,2976,"bg"],[2985,2981,2985,2980,"bg"],
  [2988,2985,2988,2983,"bg"],[2987,2987,2988,2986,"rr"],[2986,2983,2987,2983,"br"],[2984,2981,2985,2980,"yr"],[2981,2981,2982,2979,"rr"],
  [2982,2978,2982,2977,"mr"],[2979,2977,2979,2977,"pg"],[2979,2979,2980,2977,"gg"],[2980,2978,2980,2976,"pg"],[2979,2977,2986,2975,"pw"],
  [2977,2974,2979,2973,"pr"],[2973,2970,2976,2970,"pr"],[2976,2970,2977,2970,"pg"],[2975,2974,2977,2972,"pr"],[2974,2974,2976,2972,"rr"],
  [2974,2968,2975,2968,"pr"],[2970,2968,2971,2968,"pg"],[2970,2970,2970,2967,"gg"],[2969,2967,2969,2966,"pw"],[2968,2964,2970,2964,"pr"],
  [2965,2962,2967,2962,"pr"],[2962,2962,2966,2961,"rr"],[2962,2961,2964,2961,"pg"],[2963,2959,2963,2957,"pw"],[2959,2956,2960,2956,"pr"],
  [2955,2954,2956,2954,"pr"],[2955,2950,2955,2950,"pr"],[2950,2949,2951,2947,"pg"],[2950,2947,2950,2945,"pr"],[2947,2945,2947,2942,"pr"],
  [2945,2944,2946,2941,"pr"],[2944,2941,2945,2940,"pr"],[2942,2937,2942,2937,"pr"],[2937,2936,2937,2936,"pr"],[2945,2936,2945,2936,"pg"],
  [2948,2944,2951,2943,"gw"],[2948,2947,2950,2946,"mr"],[2947,2946,2948,2945,"mw"],[2948,2947,2951,2947,"sr"],[2948,2947,2948,2947,"gg"]
];

// one value per bar
const hull = [
  2951.9,2949.9,2968.3,2984.6,2983.1,2976.6,2969.6,2969.4,2972.1,2971.3,2969.8,2971.7,2974.7,2976.5,2978,2979.3,2979.6,2979.3,2978.6,2977.9,
  2976.1,2972.7,2973.3,2976.7,2977.8,2976.6,2976.5,2977.7,2977,2975.3,2977,2979.4,2980.3,2980.3,2980.2,2980.1,2980.7,2981.2,2981.8,2982.8,
  2982,2980.9,2981.3,2982.1,2982.2,2982.1,2982,2982.7,2983.2,2983.2,2984.4,2984.8,2984.2,2984.5,2985.1,2985.8,2986.2,2986.1,2985.5,2985.5,
  2986.7,2987.3,2991.5,2995.2,2991.4,2984.7,2981.9,2979,2976.9,2976.5,2975,2974.6,2975.8,2975.7,2975,2975.5,2976.1,2976.2,2978.5,2982.6,
  2983.6,2983.2,2979.6,2978.5,2982.8,2988.1,2988.8,2985.4,2981.1,2980,2978.6,2978.2,2978.8,2979.8,2978.8,2974.9,2970.8,2972.5,2975.1,2974.6,
  2970.6,2968.1,2969.5,2968.6,2964.4,2961.8,2961.1,2961.5,2960,2956.7,2954,2950.8,2949,2947.4,2945.1,2943.6,2941.5,2937.6,2935.4,2940.5,
  2948.2,2949.5,2947.7,2947,2947.7
];

// bar index, value pairs
const average = [
  0,2957,1,2956.4,2,2958.6,3,2960.6,4,2962.2,5,2963.3,6,2963.8,7,2964.6,8,2965.3,9,2965.8,10,2966.2,11,2967,12,2967.7,13,2968.5,14,2969.3,
  15,2970.3,16,2971.1,17,2971.9,18,2972.4,19,2973,20,2973.2,21,2973.1,22,2973.5,24,2974,26,2974.5,27,2974.8,29,2975,30,2975.4,32,2976.2,
  34,2977,36,2977.7,39,2978.7,42,2979.4,46,2980.3,49,2981,50,2981.4,52,2981.9,54,2982.4,56,2983.1,58,2983.5,61,2984.4,62,2985.2,63,2986,
  64,2986.3,65,2986.1,66,2985.8,67,2985,68,2984.4,69,2983.7,70,2982.8,71,2982.1,72,2981.6,73,2980.9,74,2980.4,77,2979.2,78,2979.3,79,2979.7,
  81,2980.2,82,2980,83,2980.1,84,2980.4,85,2981.2,86,2981.7,87,2981.9,89,2981.7,90,2981.3,92,2980.9,93,2980.8,94,2980.5,95,2979.9,96,2979,
  97,2978.6,98,2978.2,99,2977.8,100,2977,101,2976.2,102,2975.7,103,2974.9,104,2973.8,105,2972.8,106,2971.7,107,2970.8,108,2969.7,109,2968.4,
  110,2967,111,2965.4,112,2964,113,2962.4,114,2960.8,115,2959.2,116,2957.4,117,2955.5,118,2953.6,119,2952.8,120,2952.4,121,2951.9,122,2951.4,
  123,2951,124,2950.7
];
const fast = [
  0,2949.4,1,2949.41,2,2953.1,3,2959.6,4,2967.1,5,2972.5,6,2975.7,7,2977.8,8,2978.6,9,2978.2,10,2976.7,11,2975.2,12,2974.1,13,2973.9,14,2974.7,
  15,2975.9,16,2977,17,2978.3,18,2979.4,19,2980,20,2979.7,21,2978.6,22,2977.4,23,2976.5,24,2976,25,2975.7,26,2975.8,27,2976,28,2976.3,
  30,2976.7,31,2977.2,32,2978,34,2979.5,36,2980.7,38,2981.7,39,2982.2,40,2982.3,42,2982.5,44,2982.4,46,2982.3,47,2982.4,48,2982.6,50,2983.3,
  52,2984,54,2984.9,56,2985.8,57,2986.1,59,2986.2,60,2986.5,61,2986.8,62,2987.8,63,2989.5,64,2990.5,65,2990.4,66,2989.4,67,2987.4,68,2984.3,
  69,2981.6,70,2978.7,71,2976,72,2974.1,73,2973,74,2972.5,75,2972.6,76,2973,77,2973.7,78,2974.9,79,2976.8,80,2978.7,81,2980.4,82,2981.3,
  83,2981.7,84,2982.5,85,2983.9,86,2985.2,87,2986,88,2985.8,89,2985,90,2983.7,91,2982.2,92,2980.7,93,2980.1,94,2978.5,95,2977.4,96,2975.3,
  97,2974.3,98,2973.2,99,2972.6,100,2971.4,102,2969.8,103,2968.8,104,2967.6,105,2965.7,106,2963.9,107,2962.2,108,2960.7,109,2958.9,110,2957,
  111,2954.8,112,2952.2,113,2950,114,2947.3,115,2945.1,116,2942.7,117,2941,118,2938,119,2937.3,120,2937.8,121,2939.4,122,2941.4,123,2943.5,
  124,2945.5
];
const slow = [
  0,2950.5,1,2949.8,2,2951.4,3,2954.7,4,2958.9,5,2963.4,6,2967.3,7,2970.1,8,2972.7,9,2974.7,10,2975.9,11,2976.8,12,2977.5,13,2977.9,
  15,2978.7,17,2979.6,19,2980.2,20,2980.19,21,2979.9,22,2979.2,24,2978.2,26,2977.4,28,2976.9,29,2976.8,30,2976.81,31,2977,32,2977.4,
  34,2978.6,36,2979.8,38,2980.8,39,2981.5,41,2982.3,43,2982.8,46,2983,48,2983.1,50,2983.4,52,2983.9,54,2984.5,56,2985.4,58,2986,
  60,2986.4,61,2986.8,62,2987.5,63,2988.7,64,2989.6,65,2989.8,66,2989.5,67,2988.4,68,2986.9,69,2985,70,2982.8,71,2980.5,72,2978.5,
  73,2976.6,74,2974.8,75,2973.8,76,2973.1,77,2972.5,78,2972.7,79,2973.7,80,2974.9,81,2976.3,82,2977.5,83,2978.7,84,2979.8,85,2981.2,
  86,2982.9,87,2984.3,88,2985,89,2985.2,90,2984.8,91,2984.1,92,2983,93,2982.4,94,2981.4,95,2980,96,2978.2,97,2976.5,98,2975.1,99,2974.3,
  100,2972.7,102,2970.3,104,2967.7,105,2966.3,106,2964.7,107,2963.1,108,2961.7,109,2959.8,110,2957.9,111,2955.9,112,2953.5,113,2951.3,
  114,2948.9,115,2946.4,116,2944.2,117,2941.8,118,2939.2,119,2937.5,120,2936.8,121,2937,122,2937.7,123,2938.8,124,2940.2
];

const x = i => 20 + i * 30;
const y = p => Math.round((795 + (2992 - p) * 13.08) * 10) / 10;

function line(x1, y1, x2, y2, color, width) {
  return `<line x1="${x1}" y1="${y1}" x2="${x2}" y2="${y2}" stroke="${color}" stroke-width="${width}"/>`;
}

function bar(b, i) {
  const [top, bottom, high, low, code] = b;
  const edge = edges[code[1]];
  let out = "";
  if (high > top) out += line(x(i), y(high), x(i), y(top), edge, 1);
  if (low < bottom) out += line(x(i), y(bottom), x(i), y(low), edge, 1);
  if (top === bottom) return out + line(x(i) - 11, y(top), x(i) + 11, y(top), edge, 3);
  return out + `<rect x="${x(i) - 10}" y="${y(top)}" width="20" height="${y(bottom) - y(top)}" fill="${fills[code[0]]}" stroke="${edge}" stroke-width="2.500"/>`;
}

// joins runs of rising and falling values so the dashes stay even
function trend(pairs, up, down, width, dash) {
  let out = "", run = "", last = null;
  const flush = () => {
    if (run) out += `<polyline points="${run}" fill="none" stroke="${last}" stroke-width="${width}" stroke-dasharray="${dash || "none"}"/>`;
  };
  for (let k = 0; k < pairs.length - 2; k += 2) {
    const color = pairs[k + 3] >= pairs[k + 1] ? up : down;
    if (color !== last) {
      flush();
      last = color;
      run = `${x(pairs[k])},${y(pairs[k + 1])}`;
    }
    run += ` ${x(pairs[k + 2])},${y(pairs[k + 3])}`;
  }
  flush();
  return out;
}

function text(tx, ty, value, anchor = "middle", color = "") {
  return `<text x="${tx}" y="${ty}" text-anchor="${anchor}"${color ? ` fill="${color}"` : ""}>${value}</text>`;
}

let svg = "";

// swing lines
[[20,1369,1618],[50,1070,1318],[260,782,1031],[410,743,990],[590,704,951],[590,1003,1160],[800,717,964],[800,1003,1160],
 [1280,665,912],[1280,951,1160],[1400,652,899],[1400,938,1160],[1940,521,769],[1940,860,1108],[2240,756,1004],[2240,1043,1160],
 [2630,599,848],[2630,912,1173],[3590,1148,1395],[3590,1539,1788]
].forEach(([lx, a, b]) => svg += line(lx, a, lx, b, "#0000f0", 1.5));

// bar numbers
svg += '<g class="nums">';
[[50,192],[80,1],[110,2],[170,4],[230,6],[290,8],[350,10],[3380,54],[3440,56],[3500,58],[3560,60],[3620,62],[3680,64],[3740,66]]
  .forEach(([nx, n]) => svg += text(nx, 1514, n));
svg += "</g>";

const onTop = b => b[4][0] === "p" || b[4][0] === "b";
bars.forEach((b, i) => { if (!onTop(b)) svg += bar(b, i); });
svg += line(x(86), y(2988), x(124), y(2978.5), "#0080ff", 3);
svg += line(x(118), y(2935.2), x(124), y(2941), "#0080ff", 3);
svg += trend(slow, "#0000ff", "#ff0000", 2, "5 3");
svg += trend(fast, "#008000", "#ffff80", 3, "9 4");
svg += trend(average, "#00ff00", "#ffff00", 3);
svg += trend(hull.flatMap((v, i) => [i, v]), "#ffffff", "#ff00ff", 4.5);

[[0,1358],[6,1112],[10,1097],[21,1058],[29,1018],[41,953],[70,1059],[82,1005],[96,1083],[118,1538]]
  .forEach(([i, cy]) => svg += `<path d="M${x(i) - 6} ${cy - 6}h12l-6 14z" fill="#ff0000"/>`);
[[26,975],[62,766],[85,845]]
  .forEach(([i, cy]) => svg += `<path d="M${x(i) - 6} ${cy + 6}h12l-6 -12z" fill="#00e000"/>`);
bars.forEach((b, i) => { if (onTop(b)) svg += bar(b, i); });

svg += text(3600, 1404, "01", "middle", "#000");
svg += '<path d="M3581 1400l18 18M3599 1400l-18 18" stroke="#00c8d0" stroke-width="5"/>';

svg += '<g class="marks">';
[[236,1006,1],[386,980,2],[566,915,3],[566,1046,4],[776,954,2],[776,1072,"B"],[1256,902,3],[1257,1019,"A"],[1376,876,2],[1376,993,1],
 [1915,732,3],[2216,967,4],[2216,1098,1],[2607,810,"B"],[2606,941,2],[3565,1465,"A"],[3565,1608,3]
].forEach(([mx, my, s]) => svg += text(mx, my + 6, s));
svg += "</g>";

// axes
svg += line(2.5, 140, 2.5, 2033, "#000", 1.5);
svg += line(3786, 140, 3786, 2003, "#000", 1.5);
svg += line(3, 2003, 3786, 2003, "#000", 2);
for (let p = 3040; p >= 2900; p -= 4) {
  svg += line(3786, y(p), 3789, y(p), "#000", 1.5);
  if (p !== 2948) svg += text(3791, y(p) + 7, p, "start", "#fff");
}
svg += '<rect x="3790" y="1357" width="42" height="26" fill="#fff"/>' + text(3791, 1377, 2948, "start", "#000");

svg += '<rect x="4" y="2007" width="74" height="25" fill="#fff"/>' + text(4, 2026, "-12-21 Fr", "start", "#626262");
svg += '<rect x="100" y="2007" width="81" height="25" fill="#fff"/>' + text(101, 2026, "12-26 We", "start", "#626262");
svg += line(20, 2003, 20, 2007, "#000", 1.5) + line(140, 2003, 140, 2007, "#000", 1.5);
["19:40", "19:50", "20:00"].forEach((t, k) => {
  svg += line(230 + k * 60, 2003, 230 + k * 60, 2007, "#000", 1.5) + text(230 + k * 60, 2026, t, "middle", "#fff");
});
for (let m = 130; m <= 330; m += 10) {
  const tx = 2540 + (m - 130) * 6;
  svg += line(tx, 2003, tx, 2007, "#000", 1.5) + text(tx, 2026, Math.floor(m / 60) + ":" + String(m % 60).padStart(2, "0"), "middle", "#fff");
}
svg += '<rect x="3806" y="2007" width="32" height="26" fill="#00c400"/>' + text(3822, 2026, 29, "middle", "#fff");

document.getElementById("plot").innerHTML = svg;

// entry, last activity, symbol, id, type, side, open/close, qty, price, price 2, average
const orders = [
  ["2018-12-26  08:30:03", "2018-12-26  08:30:04", "NQH9-CME", 4824, "Stop Limit", "Sell", "Open", 1, "5941.25", "5940.25", "0.00"],
  ["2018-12-26  08:30:03", "2018-12-26  08:30:04", "NQH9-CME", 4825, "Limit", "Buy", "Close", 0, "5932.25", "0.00", "0.00"],
  ["2018-12-26  08:30:03", "2018-12-26  08:30:04", "NQH9-CME", 4826, "Stop", "Buy", "Close", 0, "5963.75", "0.00", "0.00"],
  ["2018-12-27  05:10:01", "2018-12-27  05:10:02", "FESX0319-EUREX", 4827, "Stop Limit", "Buy", "Open", 1, "2945", "2949", "0"],
  ["2018-12-27  05:10:01", "2018-12-27  05:10:02", "FESX0319-EUREX", 4828, "Limit", "Sell", "Close", 0, "2949", "0", "0"],
  ["2018-12-27  05:10:01", "2018-12-27  05:10:02", "FESX0319-EUREX", 4829, "Stop", "Sell", "Close", 0, "2935", "0", "0"],
  ["2018-12-27  05:30:01", "2018-12-27  05:30:02", "FESX0319-EUREX", 4830, "Stop Limit", "Buy", "Open", 2, "2951", "2955", "0"],
  ["2018-12-27  05:30:01", "2018-12-27  05:30:01", "FESX0319-EUREX", 4831, "Limit", "Sell", "Close", 0, "2957", "0", "0"],
  ["2018-12-27  05:30:01", "2018-12-27  05:30:01", "FESX0319-EUREX", 4832, "Stop", "Sell", "Close", 0, "2935", "0", "0"]
];

let rows = "";
orders.forEach(o => {
  const [entry, last, symbol, id, type, side, oc, qty, price, price2, avg] = o;
  const cells = [entry, last, symbol, "Canceled", id, type, side, oc, qty, price, price2, 0, avg, 0, "Day", ""];
  rows += '<tr class="filled">' + cells.map((c, i) =>
    `<td${i === 6 ? ` class="${side.toLowerCase()}"` : ""}>${String(c).replace("  ", "&nbsp; ")}</td>`).join("") + "</tr>";
});
for (let i = 0; i < 15; i++) {
  rows += "<tr>" + "<td></td>".repeat(16) + "</tr>";
}
document.getElementById("orderRows").innerHTML = rows;
```
